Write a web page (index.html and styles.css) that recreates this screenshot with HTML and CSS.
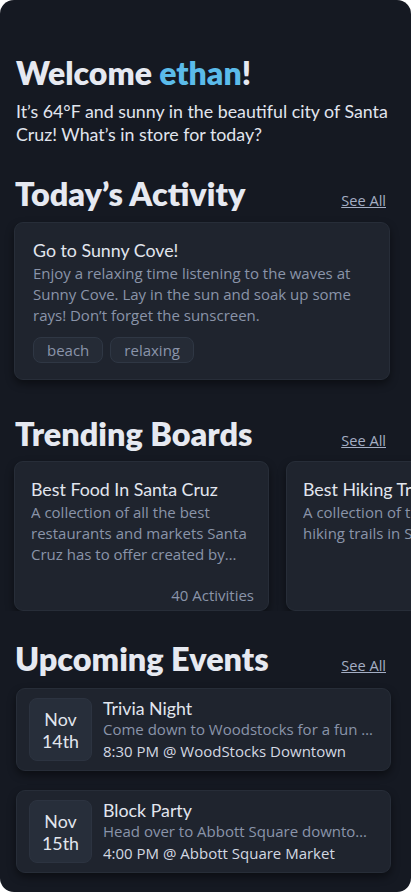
FILE: index.html
```html
<!DOCTYPE html>
<html lang="en">
<head>
<meta charset="utf-8">
<meta name="viewport" content="width=device-width, initial-scale=1">
<title>Home</title>
<link rel="stylesheet" href="styles.css">
</head>
<body>
<div class="app">
  <header class="welcome">
    <h1 class="welcome-title">Welcome <span class="name">ethan</span>!</h1>
    <p class="welcome-text">It’s 64°F and sunny in the beautiful city of Santa Cruz! What’s in store for today?</p>
  </header>

  <section class="section section-activity">
    <div class="section-head">
      <h2 class="section-title">Today’s Activity</h2>
      <a class="see-all" href="#">See All</a>
    </div>
    <div class="card activity">
      <h3 class="card-title">Go to Sunny Cove!</h3>
      <p class="card-desc">Enjoy a relaxing time listening to the waves at Sunny Cove. Lay in the sun and soak up some rays! Don’t forget the sunscreen.</p>
      <div class="tags">
        <span class="tag">beach</span>
        <span class="tag">relaxing</span>
      </div>
    </div>
  </section>

  <section class="section section-boards">
    <div class="section-head">
      <h2 class="section-title">Trending Boards</h2>
      <a class="see-all" href="#">See All</a>
    </div>
    <div class="boards">
      <div class="card board">
        <h3 class="card-title">Best Food In Santa Cruz</h3>
        <p class="card-desc clamp">A collection of all the best restaurants and markets Santa Cruz has to offer created by locals who love food.</p>
        <div class="board-count">40 Activities</div>
      </div>
      <div class="card board">
        <h3 class="card-title">Best Hiking Trails</h3>
        <p class="card-desc clamp">A collection of the coolest hiking trails in Santa Cruz.</p>
        <div class="board-count">25 Activities</div>
      </div>
    </div>
  </section>

  <section class="section section-events">
    <div class="section-head">
      <h2 class="section-title">Upcoming Events</h2>
      <a class="see-all" href="#">See All</a>
    </div>
    <div class="events">
      <div class="card event">
        <div class="date"><span>Nov</span><span>14th</span></div>
        <div class="event-info">
          <h3 class="card-title">Trivia Night</h3>
          <p class="event-desc">Come down to Woodstocks for a fun trivia night with friends.</p>
          <p class="event-time">8:30 PM @ WoodStocks Downtown</p>
        </div>
      </div>
      <div class="card event">
        <div class="date"><span>Nov</span><span>15th</span></div>
        <div class="event-info">
          <h3 class="card-title">Block Party</h3>
          <p class="event-desc">Head over to Abbott Square downtown for a block party.</p>
          <p class="event-time">4:00 PM @ Abbott Square Market</p>
        </div>
      </div>
    </div>
  </section>
</div>
</body>
</html>
```
FILE: styles.css
```css
* { box-sizing: border-box; }
html, body { margin: 0; padding: 0; }
body {
  background: #ffffff;
  font-family: "Lato", "Noto Sans", sans-serif;
  color: #e4e7ef;
}
.app {
  background: #151922;
  border-radius: 14px;
  height: 892px;
  overflow: hidden;
  padding: 53px 0 0 0;
}
.welcome { padding: 0 16px; }
.welcome-title {
  margin: 0;
  font-size: 32px;
  line-height: 40px;
  font-weight: 800;
  color: #e6e9f1;
}
.name { color: #5bbbea; }
.welcome-text {
  margin: 7px 0 0;
  font-size: 17.8px;
  line-height: 23px;
  color: #e1e5ee;
}
.section-activity { margin-top: 28px; }
.section-boards { margin-top: 34px; }
.section-events { margin-top: 28px; }
.section-head {
  display: flex;
  justify-content: space-between;
  align-items: flex-end;
  padding: 0 25px 0 15px;
}
.section-title {
  margin: 0;
  font-size: 32.4px;
  line-height: 40px;
  font-weight: 800;
  color: #e6e9f1;
}
.see-all {
  font-family: "Open Sans", sans-serif;
  font-size: 14.6px;
  color: #a4aec4;
  text-decoration: underline;
  margin-bottom: 4px;
}
.card {
  background: #1f242e;
  border: 1px solid #272d38;
  border-radius: 9px;
  box-shadow: 0 4px 8px rgba(0, 0, 0, 0.45);
}
.card-title {
  margin: 0;
  font-size: 17.8px;
  line-height: 22px;
  font-weight: 400;
  color: #e2e6ee;
}
.card-desc {
  margin: 2px 0 0;
  font-family: "Open Sans", sans-serif;
  font-size: 15px;
  line-height: 21px;
  color: #8a94a9;
}
.activity {
  margin: 8px 21px 0 14px;
  padding: 16px 18px 16px 18px;
}
.tags { display: flex; gap: 7px; margin-top: 11px; }
.tag {
  font-family: "Open Sans", sans-serif;
  font-size: 15px;
  line-height: 24px;
  color: #8a94aa;
  background: #252b36;
  border: 1px solid #2f3744;
  border-radius: 8px;
  padding: 0 13px;
}
.boards {
  display: flex;
  gap: 17px;
  padding: 7px 0 0 14px;
  overflow: hidden;
}
.board {
  flex: 0 0 255px;
  height: 150px;
  padding: 16px 14px 5px 16px;
  display: flex;
  flex-direction: column;
}
.clamp {
  display: -webkit-box;
  -webkit-line-clamp: 3;
  -webkit-box-orient: vertical;
  overflow: hidden;
}
.board-count {
  margin-top: auto;
  text-align: right;
  font-family: "Open Sans", sans-serif;
  font-size: 15px;
  line-height: 20px;
  color: #8a94a9;
}
.events {
  display: flex;
  flex-direction: column;
  gap: 19px;
  padding: 9px 20px 0 16px;
}
.event {
  display: flex;
  align-items: center;
  gap: 11px;
  padding: 9px 12px;
  height: 83px;
}
.date {
  flex: 0 0 63px;
  height: 63px;
  border-radius: 8px;
  background: #272e3a;
  border: 1px solid #2c3340;
  display: flex;
  flex-direction: column;
  align-items: center;
  justify-content: center;
  font-size: 17.8px;
  line-height: 22px;
  color: #e2e6ee;
}
.event-info { min-width: 0; flex: 1; }
.event-desc, .event-time {
  margin: 0;
  font-family: "Open Sans", sans-serif;
  font-size: 15px;
  line-height: 21px;
  white-space: nowrap;
  overflow: hidden;
  text-overflow: ellipsis;
}
.event-desc { color: #8a94aa; }
.event-time { color: #d3d8e2; line-height: 22px; }
```
